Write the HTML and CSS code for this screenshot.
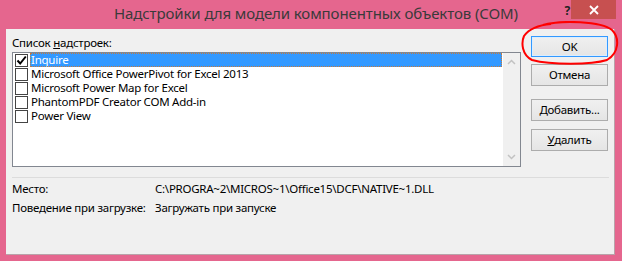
FILE: index.html
```html
<!DOCTYPE html>
<html lang="ru">
<head>
<meta charset="utf-8">
<link rel="stylesheet" href="styles.css">
</head>
<body>
<div class="window">
  <div class="titlebar">
    <span class="title">Надстройки для модели компонентных объектов (COM)</span>
    <span class="help">?</span>
    <span class="close"><svg width="10" height="10" viewBox="0 0 10 10"><path d="M1 1 L9 9 M9 1 L1 9" stroke="#fff" stroke-width="1.8"/></svg></span>
  </div>
  <div class="client">
    <div class="top">
      <div class="left">
        <div class="label">Список <u>н</u>адстроек:</div>
        <div class="listbox">
          <div class="items">
            <div class="row selected"><span class="cb"><svg width="11" height="11" viewBox="0 0 11 11"><path d="M1.5 5.5 L4.2 8.5 L9.8 1.5" fill="none" stroke="#000" stroke-width="2"/></svg></span><span class="txt">Inquire</span></div>
            <div class="row"><span class="cb"></span><span class="txt">Microsoft Office PowerPivot for Excel 2013</span></div>
            <div class="row"><span class="cb"></span><span class="txt">Microsoft Power Map for Excel</span></div>
            <div class="row"><span class="cb"></span><span class="txt">PhantomPDF Creator COM Add-in</span></div>
            <div class="row"><span class="cb"></span><span class="txt">Power View</span></div>
          </div>
          <div class="scroll">
            <svg width="9" height="6" viewBox="0 0 9 6"><path d="M1 5 L4.5 1.5 L8 5" fill="none" stroke="#c2c2c2" stroke-width="1.5"/></svg>
            <svg width="9" height="6" viewBox="0 0 9 6"><path d="M1 1 L4.5 4.5 L8 1" fill="none" stroke="#c2c2c2" stroke-width="1.5"/></svg>
          </div>
        </div>
      </div>
      <div class="buttons">
        <div class="btn default">OK</div>
        <div class="btn">Отмена</div>
        <div class="btn add"><u>Д</u>обавить...</div>
        <div class="btn"><u>У</u>далить</div>
      </div>
    </div>
    <div class="sep"></div>
    <div class="info">
      <span>Место:</span><span>C:\PROGRA~2\MICROS~1\Office15\DCF\NATIVE~1.DLL</span>
      <span>Поведение при загрузке:</span><span>Загружать при запуске</span>
    </div>
  </div>
  <svg class="annot" width="100" height="50" viewBox="0 0 100 50"><path d="M22 4 C40 -1 80 0 91 9 C99 17 98 32 86 39 C70 44 30 44 11 39 C1 34 0 22 3 15 C8 8 18 4 30 3" fill="none" stroke="#f00" stroke-width="2"/></svg>
</div>
</body>
</html>
```
FILE: styles.css
```css
html, body {
  margin: 0;
  padding: 0;
}
body {
  width: 622px;
  height: 261px;
  background: #e5668e;
  font-family: "Noto Sans", "Open Sans", sans-serif;
  font-size: 11.5px;
  letter-spacing: -0.25px;
  color: #000;
  overflow: hidden;
}
.window {
  position: relative;
  width: 622px;
  height: 261px;
  display: flex;
  flex-direction: column;
}
.titlebar {
  height: 29px;
  display: flex;
  align-items: flex-start;
  flex: none;
}
.title {
  margin-left: 114px;
  margin-top: 3px;
  font-size: 15px;
  letter-spacing: -0.1px;
  line-height: 20px;
  color: #3a3a3a;
  white-space: nowrap;
}
.help {
  margin-left: auto;
  margin-top: 4px;
  font-size: 12px;
  line-height: 14px;
  font-weight: bold;
  color: #222;
}
.close {
  margin-left: 1px;
  margin-right: 6px;
  width: 45px;
  height: 19px;
  background: #c75050;
  display: flex;
  align-items: center;
  justify-content: center;
}
.client {
  flex: 1;
  margin: 0 7px 6px 6px;
  background: #f0f0f0;
  border-right: 1px solid #b9a2a9;
  border-bottom: 1px solid #b9a2a9;
  padding: 7px 6px 0 6px;
  display: flex;
  flex-direction: column;
}
.top {
  display: flex;
  gap: 10px;
}
.left {
  display: flex;
  flex-direction: column;
  gap: 2px;
}
.label, .row, .info span, .btn {
  line-height: 14px;
  white-space: nowrap;
}
.listbox {
  width: 507px;
  height: 113px;
  border: 1px solid #828790;
  background: #fff;
  display: flex;
}
.items {
  flex: 1;
  padding: 0 0 0 2px;
}
.row {
  height: 14px;
  display: flex;
  align-items: center;
}
.cb {
  width: 11px;
  height: 11px;
  border: 1px solid #444;
  background: #fff;
  flex: none;
  display: flex;
}
.txt {
  margin-left: 2px;
  padding: 0 1px;
  height: 14px;
  flex: 1;
}
.selected .txt {
  background: #3399ff;
  color: #fff;
  outline: 1px dotted #c77a3a;
  outline-offset: -1px;
}
.scroll {
  width: 17px;
  margin-left: 1px;
  background: #f0f0f0;
  display: flex;
  flex-direction: column;
  align-items: center;
  justify-content: space-between;
  padding: 6px 0 6px;
}
.buttons {
  display: flex;
  flex-direction: column;
  width: 77px;
}
.btn {
  height: 20px;
  box-sizing: content-box;
  border: 1px solid #acacac;
  background: linear-gradient(#f0f0f0, #e5e5e5);
  display: flex;
  align-items: center;
  justify-content: center;
  margin-bottom: 7px;
}
.btn.default {
  border-color: #3399ff;
  height: 19px;
  box-shadow: inset 0 0 0 1px #dbeeff;
}
.btn.add {
  margin-top: 6px;
  margin-bottom: 8px;
}
.sep {
  height: 1px;
  background: #dcdcdc;
  margin-top: 10px;
  margin-right: -1px;
}
.info {
  margin-top: 4px;
  display: grid;
  grid-template-columns: 143px auto;
  row-gap: 5px;
}
.annot {
  position: absolute;
  left: 521px;
  top: 21px;
}
```
